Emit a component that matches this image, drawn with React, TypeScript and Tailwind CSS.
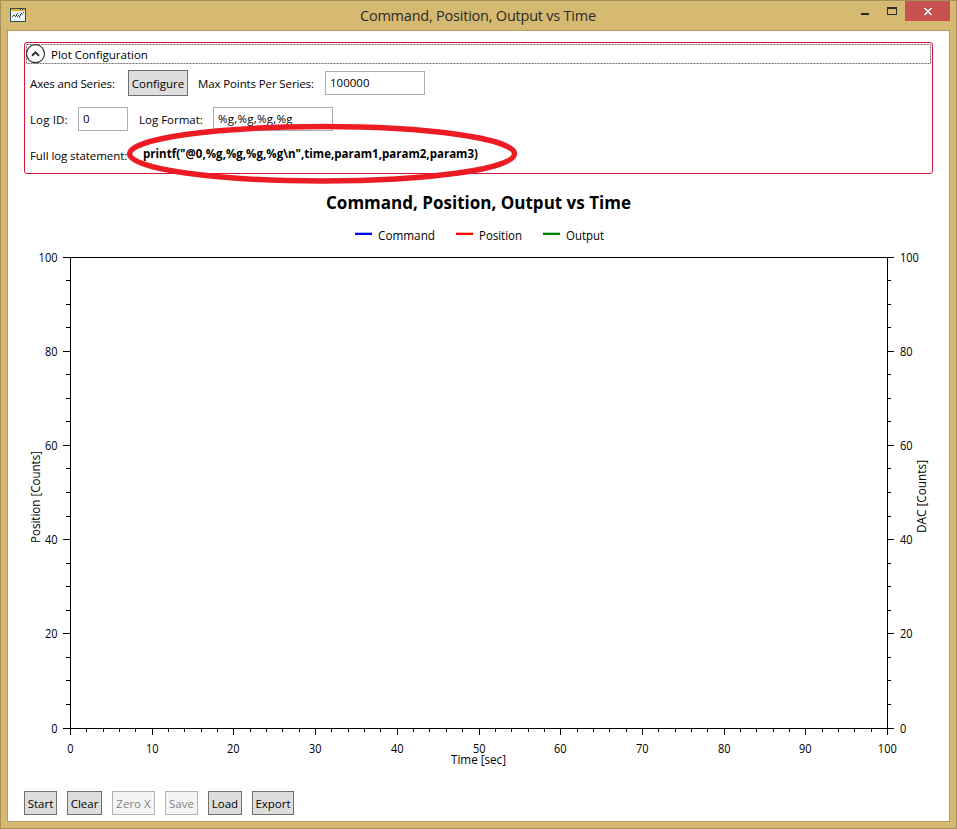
import React from "react";

const majors = [0, 1, 2, 3, 4, 5];
const minors = Array.from({ length: 21 }, (_, i) => i);
const xTicks = Array.from({ length: 51 }, (_, i) => i);
const xLabels = Array.from({ length: 11 }, (_, i) => i);

const yAt = (v: number) => Math.floor(728 - v * 4.71 + 0.01);
const xAt = (v: number) => Math.round(70 + v * 8.17);

function Label({ x, y, w, children, className = "" }: { x: number; y: number; w: number; children: React.ReactNode; className?: string }) {
  return (
    <text x={x} y={y} textLength={w} lengthAdjust="spacingAndGlyphs" className={className}>
      {children}
    </text>
  );
}

function NumberLabel({ value, x, y, align }: { value: number; x: number; y: number; align: "left" | "right" | "center" }) {
  const w = String(value).length * 6.3;
  const left = align === "left" ? x : align === "right" ? x - w : x - w / 2;
  return (
    <Label x={left} y={y} w={w}>
      {value}
    </Label>
  );
}

function Chart() {
  return (
    <svg
      viewBox="8 174 941 617"
      className="block h-[617px] w-[941px] shrink-0 fill-black font-['Open_Sans',sans-serif] text-[12px]"
    >
      <Label x={326} y={209} w={305} className="text-[18px] font-bold">Command, Position, Output vs Time</Label>
      <rect x="355" y="232.7" width="17" height="2.3" fill="#0000ff" />
      <Label x={378} y={240} w={57}>Command</Label>
      <rect x="456" y="232.7" width="17" height="2.3" fill="#ff0000" />
      <Label x={479} y={240} w={43}>Position</Label>
      <rect x="543" y="232.7" width="17" height="2.3" fill="#008000" />
      <Label x={566} y={240} w={38}>Output</Label>

      <g shapeRendering="crispEdges">
        <rect x="70" y="257" width="818" height="1" />
        <rect x="70" y="728" width="818" height="1" />
        <rect x="70" y="257" width="1" height="472" />
        <rect x="887" y="257" width="1" height="472" />
        {minors.map((i) => {
          const major = i % 4 === 0;
          const y = yAt(i * 5);
          return (
            <g key={i}>
              <rect x={major ? 63 : 66} y={y} width={major ? 7 : 4} height="1" />
              <rect x="888" y={y} width={major ? 6 : 3} height="1" />
            </g>
          );
        })}
        {xTicks.map((i) => (
          <rect key={i} x={xAt(i * 2)} y="729" width="1" height={i % 5 === 0 ? 6 : 3} />
        ))}
      </g>

      {majors.map((i) => (
        <g key={i}>
          <NumberLabel value={i * 20} x={57.5} y={yAt(i * 20) + 5} align="right" />
          <NumberLabel value={i * 20} x={900} y={yAt(i * 20) + 5} align="left" />
        </g>
      ))}
      {xLabels.map((i) => (
        <NumberLabel key={i} value={i * 10} x={xAt(i * 10) + 0.3} y={753} align="center" />
      ))}
      <Label x={451} y={764} w={55}>Time [sec]</Label>
      <g transform="translate(40 543) rotate(-90)">
        <Label x={0} y={0} w={92}>Position [Counts]</Label>
      </g>
      <g transform="translate(926 533) rotate(-90)">
        <Label x={0} y={0} w={73}>DAC [Counts]</Label>
      </g>
    </svg>
  );
}

function Button({ children, className, disabled = false }: { children: React.ReactNode; className: string; disabled?: boolean }) {
  const tone = disabled ? "border-[#adb2b5] bg-[#f4f4f4] text-[#838383]" : "border-[#707070] bg-[#dddddd] text-black";
  return (
    <button disabled={disabled} className={`flex shrink-0 items-center justify-center border pt-[2px] whitespace-nowrap ${tone} ${className}`}>
      {children}
    </button>
  );
}

function Field({ value, className }: { value: string; className: string }) {
  return <div className={`h-6 shrink-0 border border-[#abadb3] bg-white pl-1 leading-[22px] ${className}`}>{value}</div>;
}

function TitleBar() {
  return (
    <div className="flex h-[29px] shrink-0 items-start">
      <svg viewBox="0 0 16 14" className="mt-[7px] ml-[9px] h-[14px] w-4 shrink-0" shapeRendering="crispEdges">
        <rect width="16" height="14" fill="#2f4f57" />
        <rect x="1" y="1" width="14" height="2" fill="#f0a828" />
        <rect x="10" y="1" width="1" height="1" fill="#2f4f57" />
        <rect x="12" y="1" width="1" height="1" fill="#2f4f57" />
        <rect x="1" y="3" width="14" height="10" fill="#eef2f2" />
        <path d="M2 8h1v1H2zM3 7h1v1H3zM4 7h1v1H4zM5 8h1v1H5zM6 6h1v2H6zM7 5h1v1H7zM7 8h1v1H7zM8 7h1v1H8zM9 8h1v2H9zM10 6h1v2h-1zM11 5h1v1h-1zM12 6h1v1h-1zM13 4h1v1h-1z" fill="#2f4f57" />
      </svg>
      <div className="w-[334px] shrink-0" />
      <div className="mt-[5px] w-[237px] shrink-0 text-[14.5px] leading-[20px] whitespace-nowrap tracking-[-0.22px] text-[#2b2b2b]">
        Command, Position, Output vs Time
      </div>
      <div className="mt-[12px] ml-[264px] h-[2px] w-2 shrink-0 bg-[#2b2b2b]" />
      <div className="mt-[6px] ml-[18px] h-2 w-[10px] shrink-0 border border-t-2 border-[#2b2b2b]" />
      <div className="ml-2 flex h-5 w-[45px] shrink-0 items-center justify-center bg-[#c75050]">
        <svg viewBox="0 0 8 7" className="h-[7px] w-2" shapeRendering="crispEdges">
          <path d="M0 0h2v1h1v1h2V1h1V0h2v1H7v1H6v1H5v1h1v1h1v1h1v1H6V6H5V5H3v1H2v1H0V6h1V5h1V4h1V3H2V2H1V1H0z" fill="#fff" />
        </svg>
      </div>
    </div>
  );
}

function PlotConfiguration() {
  return (
    <section className="relative ml-4 h-[132px] w-[909px] shrink-0 rounded-[3px] border border-[#dc143c]">
      <div className="ml-px flex h-[22px] w-[905px] items-center">
        <svg viewBox="0 0 905 22" className="absolute top-0 left-px h-[22px] w-[905px]" fill="none">
          <rect x="0.5" y="1.5" width="904" height="19" stroke="#707070" strokeDasharray="2 1" />
          <circle cx="9.5" cy="10.7" r="9" fill="#fff" stroke="#333" strokeWidth="1.2" />
          <path d="M6 12.8l3.5-3.5 3.5 3.5" stroke="#333" strokeWidth="2" />
        </svg>
        <span className="ml-[25px] pt-[1px] tracking-[-0.02px]">Plot Configuration</span>
      </div>
      <div className="mt-[5px] flex h-[26px] items-center pl-[5px]">
        <span className="w-[98px] shrink-0 pt-[2px] tracking-[-0.14px]">Axes and Series:</span>
        <Button className="h-[26px] w-[60px]">Configure</Button>
        <span className="ml-[10px] w-[127px] shrink-0 pt-[2px] tracking-[-0.12px]">Max Points Per Series:</span>
        <Field value="100000" className="w-[100px]" />
      </div>
      <div className="mt-[11px] flex h-[24px] items-center pl-[5px]">
        <span className="w-[48px] shrink-0 pt-[2px] tracking-[0.12px]">Log ID:</span>
        <Field value="0" className="w-[50px]" />
        <span className="ml-[11px] w-[74px] shrink-0 pt-[2px]">Log Format:</span>
        <Field value="%g,%g,%g,%g" className="w-[120px] tracking-[0.25px]" />
      </div>
      <div className="mt-[12px] flex h-[24px] items-center pl-[5px]">
        <span className="w-[113px] shrink-0 pt-[2px] tracking-[-0.08px]">Full log statement:</span>
        <span className="pb-[2px] font-bold tracking-[0.02px]">printf("@0,%g,%g,%g,%g\n",time,param1,param2,param3)</span>
      </div>
      <svg viewBox="0 0 394 64" className="absolute top-[79px] left-[100px] h-16 w-[394px]" fill="none">
        <ellipse cx="197" cy="31.8" rx="192.5" ry="27.2" stroke="#ed1c24" strokeWidth="5.5" />
      </svg>
    </section>
  );
}

export default function App() {
  return (
    <div className="flex h-[829px] w-[957px] flex-col overflow-hidden border border-[#a68f57] bg-[#d6b970] font-['Open_Sans',sans-serif] text-[11.5px] leading-4 whitespace-nowrap text-black">
      <TitleBar />
      <main className="ml-[6px] flex h-[792px] w-[943px] shrink-0 flex-col border border-[#b39b5e] bg-white pt-[11px]">
        <PlotConfiguration />
        <Chart />
        <div className="flex h-6 shrink-0 gap-[10px] pl-4">
          <Button className="w-[33px]">Start</Button>
          <Button className="w-[35px]">Clear</Button>
          <Button className="w-[43px]" disabled>Zero X</Button>
          <Button className="w-[33px]" disabled>Save</Button>
          <Button className="w-[34px]">Load</Button>
          <Button className="w-[42px]">Export</Button>
        </div>
      </main>
    </div>
  );
}
